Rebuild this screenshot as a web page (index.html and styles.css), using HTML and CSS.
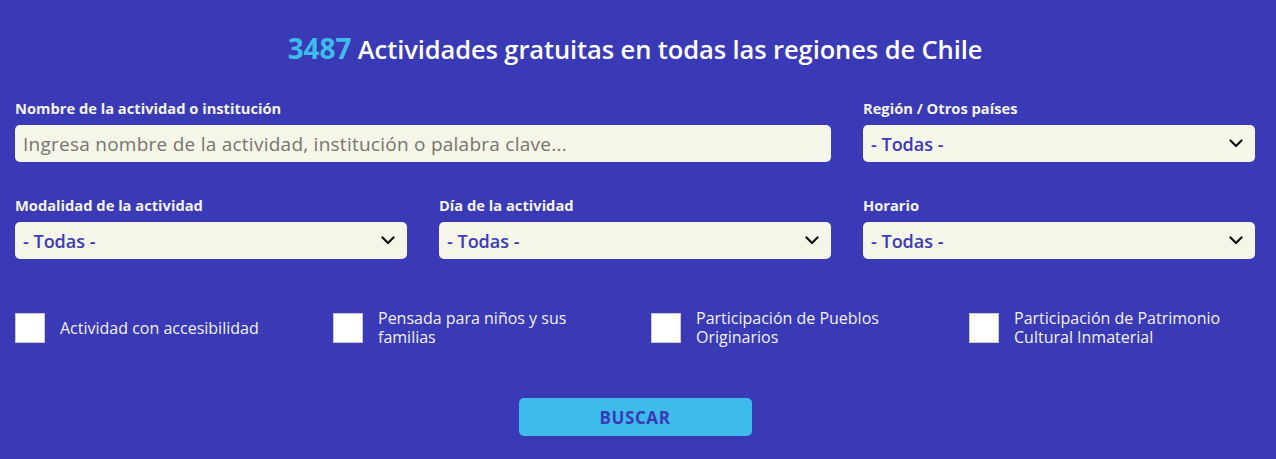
FILE: index.html
```html
<!DOCTYPE html>
<html lang="es">
<head>
<meta charset="utf-8">
<title>Buscador de actividades</title>
<link rel="stylesheet" href="styles.css">
</head>
<body>
<section class="search">
  <h1 class="title"><span class="count">3487</span> Actividades gratuitas en todas las regiones de Chile</h1>
  <form class="form">
    <div class="grid">
      <div class="field wide">
        <label class="label">Nombre de la actividad o institución</label>
        <input class="input" type="text" placeholder="Ingresa nombre de la actividad, institución o palabra clave...">
      </div>
      <div class="field">
        <label class="label">Región / Otros países</label>
        <div class="select"><span>- Todas -</span><svg class="chev" viewBox="0 0 14 9" width="14" height="9"><path d="M1.5 1.5 L7 7 L12.5 1.5" fill="none" stroke="#111" stroke-width="2.2" stroke-linecap="round" stroke-linejoin="round"/></svg></div>
      </div>
      <div class="field">
        <label class="label">Modalidad de la actividad</label>
        <div class="select"><span>- Todas -</span><svg class="chev" viewBox="0 0 14 9" width="14" height="9"><path d="M1.5 1.5 L7 7 L12.5 1.5" fill="none" stroke="#111" stroke-width="2.2" stroke-linecap="round" stroke-linejoin="round"/></svg></div>
      </div>
      <div class="field">
        <label class="label">Día de la actividad</label>
        <div class="select"><span>- Todas -</span><svg class="chev" viewBox="0 0 14 9" width="14" height="9"><path d="M1.5 1.5 L7 7 L12.5 1.5" fill="none" stroke="#111" stroke-width="2.2" stroke-linecap="round" stroke-linejoin="round"/></svg></div>
      </div>
      <div class="field">
        <label class="label">Horario</label>
        <div class="select"><span>- Todas -</span><svg class="chev" viewBox="0 0 14 9" width="14" height="9"><path d="M1.5 1.5 L7 7 L12.5 1.5" fill="none" stroke="#111" stroke-width="2.2" stroke-linecap="round" stroke-linejoin="round"/></svg></div>
      </div>
    </div>
    <div class="checks">
      <label class="check"><span class="box"></span><span class="ctext">Actividad con accesibilidad</span></label>
      <label class="check"><span class="box"></span><span class="ctext">Pensada para niños y sus familias</span></label>
      <label class="check"><span class="box"></span><span class="ctext">Participación de Pueblos Originarios</span></label>
      <label class="check"><span class="box"></span><span class="ctext">Participación de Patrimonio Cultural Inmaterial</span></label>
    </div>
    <div class="actions">
      <button class="btn" type="button">BUSCAR</button>
    </div>
  </form>
</section>
</body>
</html>
```
FILE: styles.css
```css
* { box-sizing: border-box; }
html, body { margin: 0; padding: 0; }
body {
  background: #3a39b6;
  font-family: "Open Sans", "Noto Sans", sans-serif;
  color: #f5f5ea;
  width: 1276px;
  height: 459px;
  overflow: hidden;
}
.search {
  padding: 30px 21px 0 15px;
}
.title {
  margin: 0;
  text-align: center;
  font-size: 25.5px;
  font-weight: 600;
  line-height: 36px;
  color: #ffffff;
  letter-spacing: -0.1px;
}
.count {
  color: #3dbbec;
  font-size: 28px;
  font-weight: 700;
}
.form { margin-top: 32px; }
.grid {
  display: grid;
  grid-template-columns: repeat(3, 392px);
  column-gap: 32px;
  row-gap: 34px;
}
.wide { grid-column: span 2; }
.field { display: flex; flex-direction: column; }
.label {
  font-size: 14.7px;
  font-weight: 700;
  line-height: 18px;
  margin-bottom: 8px;
  color: #f3f3ea;
}
.input {
  height: 37px;
  border: none;
  border-radius: 5px;
  background: #f5f5e9;
  font-family: inherit;
  font-size: 19px;
  letter-spacing: 0.25px;
  padding: 0 8px;
  color: #333;
  outline: none;
}
.input::placeholder { color: #76766e; }
.select {
  height: 37px;
  border-radius: 5px;
  background: #f5f5e9;
  display: flex;
  align-items: center;
  justify-content: space-between;
  padding: 0 12px 0 8px;
  font-size: 18px;
  font-weight: 600;
  color: #3b3ab5;
}
.chev { display: block; }
.checks {
  display: grid;
  grid-template-columns: repeat(4, 286px);
  column-gap: 32px;
  margin-top: 50px;
}
.check {
  display: flex;
  align-items: center;
  gap: 15px;
}
.box {
  flex: none;
  width: 30px;
  height: 30px;
  background: #ffffff;
  border: 1px solid #c9c9c9;
}
.ctext {
  font-size: 16px;
  line-height: 19px;
  width: 222px;
  color: #f1f1ea;
}
.actions {
  display: flex;
  justify-content: center;
  margin-top: 51px;
}
.btn {
  width: 233px;
  height: 38px;
  border: none;
  border-radius: 5px;
  background: #3dbbeb;
  color: #3a39b6;
  font-family: inherit;
  font-size: 17px;
  font-weight: 700;
  letter-spacing: 0.6px;
}
```
